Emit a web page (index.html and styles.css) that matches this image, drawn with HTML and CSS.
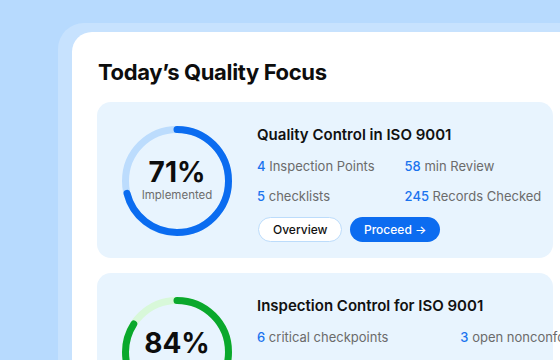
FILE: index.html
```html
<!DOCTYPE html>
<html>
<head>
  <meta charset="UTF-8">
  <title>Today's Quality Focus</title>
  <link rel="stylesheet" href="styles.css">
</head>
<body>
  <div class="frame">
    <div class="panel">
      <h1 class="title">Today’s Quality Focus</h1>

      <div class="card">
        <div class="ring">
          <svg width="110" height="110" viewBox="0 0 110 110">
            <circle cx="55" cy="55" r="51.5" fill="none" stroke="#bcdcfd" stroke-width="7"/>
            <circle cx="55" cy="55" r="51.5" fill="none" stroke="#0b6cf0" stroke-width="7"
              stroke-linecap="round" stroke-dasharray="229.7 400" transform="rotate(-90 55 55)"/>
          </svg>
          <div class="ring-label">
            <span class="ring-value">71%</span>
            <span class="ring-caption">Implemented</span>
          </div>
        </div>
        <div class="info">
          <h2 class="card-title">Quality Control in ISO 9001</h2>
          <div class="stats">
            <span><b>4</b> Inspection Points</span>
            <span><b>58</b> min Review</span>
            <span><b>5</b> checklists</span>
            <span><b>245</b> Records Checked</span>
          </div>
          <div class="actions">
            <button class="btn btn-outline">Overview</button>
            <button class="btn btn-primary">Proceed →</button>
          </div>
        </div>
      </div>

      <div class="card">
        <div class="ring">
          <svg width="110" height="110" viewBox="0 0 110 110">
            <circle cx="55" cy="55" r="51.5" fill="none" stroke="#d8f8d9" stroke-width="7"/>
            <circle cx="55" cy="55" r="51.5" fill="none" stroke="#0aa82c" stroke-width="7"
              stroke-linecap="round" stroke-dasharray="271.8 400" transform="rotate(-90 55 55)"/>
          </svg>
          <div class="ring-label">
            <span class="ring-value">84%</span>
            <span class="ring-caption">Inspected</span>
          </div>
        </div>
        <div class="info">
          <h2 class="card-title">Inspection Control for ISO 9001</h2>
          <div class="stats">
            <span><b>6</b> critical checkpoints</span>
            <span><b>3</b> open nonconformities</span>
            <span><b>12</b> corrective actions logged</span>
            <span><b>98</b> audit items closed</span>
          </div>
          <div class="actions">
            <button class="btn btn-outline">Overview</button>
            <button class="btn btn-primary">Proceed →</button>
          </div>
        </div>
      </div>
    </div>
  </div>
</body>
</html>
```

FILE: styles.css
```css
html, body {
  margin: 0;
  height: 100%;
  overflow: hidden;
}
body {
  font-family: Inter, 'Noto Sans', sans-serif;
  background: #b7dafe;
  color: #111;
}
.frame {
  margin: 23px 0 0 58px;
  padding: 9px 0 0 14px;
  width: 560px;
  height: 400px;
  background: #c7e2fe;
  border-radius: 26px 0 0 0;
}
.panel {
  background: #fff;
  border-radius: 20px 0 0 0;
  padding: 27px 0 0 25px;
  width: 520px;
  height: 400px;
  box-sizing: border-box;
  overflow: hidden;
}
.title {
  margin: 0 0 17px 1px;
  font-size: 22px;
  font-weight: 700;
  line-height: 26px;
  letter-spacing: -0.35px;
  color: #0d0d0d;
}
.card {
  display: flex;
  align-items: flex-start;
  gap: 25px;
  width: 456px;
  box-sizing: border-box;
  padding: 24px 25px 16px;
  margin-bottom: 15px;
  background: #e8f4fe;
  border-radius: 14px;
}
.ring {
  position: relative;
  width: 110px;
  height: 110px;
  flex: none;
}
.ring svg {
  display: block;
}
.ring-label {
  position: absolute;
  inset: 0;
  display: flex;
  flex-direction: column;
  align-items: center;
  justify-content: center;
  padding-bottom: 5px;
}
.ring-value {
  font-size: 28px;
  font-weight: 700;
  line-height: 33px;
  color: #0d0d0d;
}
.ring-caption {
  font-size: 11.5px;
  color: #6d6d6d;
  line-height: 13px;
}
.info {
  flex: 1;
  white-space: nowrap;
}
.card-title {
  margin: 0 0 13px;
  font-size: 15px;
  font-weight: 600;
  line-height: 18px;
  color: #111;
}
.stats {
  display: grid;
  grid-template-columns: auto auto;
  justify-content: start;
  column-gap: 30px;
  row-gap: 12px;
  font-size: 13px;
  line-height: 18px;
  color: #6b6b6b;
}
.stats b {
  font-weight: 500;
  color: #1a73ee;
}
.actions {
  display: flex;
  gap: 8px;
  margin: 12px 0 0 1px;
}
.btn {
  font-family: inherit;
  font-size: 12px;
  font-weight: 500;
  height: 25px;
  border-radius: 13px;
  padding: 0 14px;
  cursor: pointer;
}
.btn-outline {
  width: 84px;
  background: #fff;
  border: 1px solid #bcdcfb;
  color: #111;
}
.btn-primary {
  width: 90px;
  background: #0c6cf0;
  border: none;
  color: #fff;
}
```
